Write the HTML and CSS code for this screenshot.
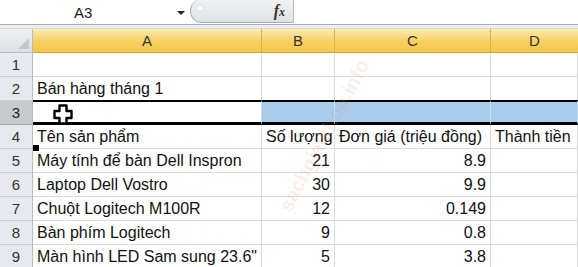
FILE: index.html
```html
<!DOCTYPE html>
<html>
<head>
<meta charset="utf-8">
<link rel="stylesheet" href="styles.css">
</head>
<body>
<div class="app">
  <div class="fbar">
    <div class="namebox"><span class="ref">A3</span></div>
    <div class="nb-arrow"></div>
    <div class="pill"><span class="bump"></span><span class="fx">f<span class="fxx">x</span></span></div>
    <div class="formula"></div>
  </div>
  <div class="strip"></div>
  <div class="sheet">
    <div class="grid">
      <div class="corner"><span class="tri"></span></div>
      <div class="ch">A</div><div class="ch">B</div><div class="ch">C</div><div class="ch last">D</div>

      <div class="rh">1</div><div class="c"></div><div class="c"></div><div class="c"></div><div class="c"></div>

      <div class="rh">2</div><div class="c t">Bán hàng tháng 1</div><div class="c"></div><div class="c"></div><div class="c"></div>

      <div class="rh sel">3</div><div class="c act"></div><div class="c hl"></div><div class="c hl"></div><div class="c hl"></div>

      <div class="rh">4</div><div class="c t">Tên sản phẩm</div><div class="c t">Số lượng</div><div class="c t">Đơn giá (triệu đồng)</div><div class="c t">Thành tiền</div>

      <div class="rh">5</div><div class="c t">Máy tính để bàn Dell Inspron</div><div class="c n">21</div><div class="c n">8.9</div><div class="c"></div>

      <div class="rh">6</div><div class="c t">Laptop Dell Vostro</div><div class="c n">30</div><div class="c n">9.9</div><div class="c"></div>

      <div class="rh">7</div><div class="c t">Chuột Logitech M100R</div><div class="c n">12</div><div class="c n">0.149</div><div class="c"></div>

      <div class="rh">8</div><div class="c t">Bàn phím Logitech</div><div class="c n">9</div><div class="c n">0.8</div><div class="c"></div>

      <div class="rh">9</div><div class="c t">Màn hình LED Sam sung 23.6"</div><div class="c n">5</div><div class="c n">3.8</div><div class="c"></div>
    </div>
    <div class="handle"></div>
    <svg class="cursor" width="20" height="21" viewBox="0 0 20 21">
      <path d="M6.5 1.5 H13.5 V7 H18.5 V14 H13.5 V19.5 H6.5 V14 H1.5 V7 H6.5 Z" fill="#fff" stroke="#000" stroke-width="2.4" stroke-linejoin="round"/>
    </svg>
    <div class="watermark">sachgiaikhoa.info</div>
  </div>
</div>
</body>
</html>
```
FILE: styles.css
```css
* { box-sizing: border-box; }
html, body { margin: 0; padding: 0; background: #fff; }
.app { width: 578px; height: 267px; overflow: hidden; font-family: "Liberation Sans", Arial, sans-serif; }

.fbar { display: flex; height: 25px; border-bottom: 1px solid #a9adb3; background: #fff; }
.namebox { width: 172px; display: flex; align-items: center; padding-left: 74px; }
.ref { font-size: 15px; color: #222; }
.nb-arrow { width: 18px; display: flex; align-items: center; justify-content: center; }
.nb-arrow::before { content: ""; border-left: 4px solid transparent; border-right: 4px solid transparent; border-top: 4px solid #222; margin-top: 1px; }
.pill { width: 104px; height: 24px; border: 1px solid #a8aeb6; border-right: 1px solid #b9bec5; border-top: none; border-radius: 14px 0 0 14px; background: linear-gradient(#f1f2f4, #dfe2e6); display: flex; align-items: center; justify-content: space-between; padding: 0 8px 0 5px; margin-top: -1px; }
.bump { width: 8px; height: 8px; border-radius: 50%; background: #f8f9fa; border: 1px solid #d8dbe0; margin-top: -6px; }
.fx { font-family: "Liberation Serif", serif; font-style: italic; font-weight: bold; font-size: 16px; color: #333; }
.fxx { font-size: 12px; }
.formula { flex: 1; background: #fff; }

.strip { height: 4px; background: #eceef1; border-bottom: 1px solid #d5d8dc; }

.sheet { position: relative; }
.grid { display: grid; grid-template-columns: 33px 229px 73px 156px 87px; grid-template-rows: 24px repeat(9, 24px); font-family: "Liberation Sans", Arial, sans-serif; }
.grid > div { overflow: visible; white-space: nowrap; }

.corner { position: relative; background: linear-gradient(#eef0f3, #dcdfe4); border-right: 1px solid #b9bdc3; border-bottom: 1px solid #b9bdc3; }
.tri { position: absolute; right: 3px; bottom: 3px; width: 0; height: 0; border-left: 11px solid transparent; border-bottom: 11px solid #c4c8ce; }
.ch { background: linear-gradient(#fcebb0, #f7d061 55%, #f5c84c); border-right: 1px solid #d6b35a; border-bottom: 1px solid #caa44c; display: flex; align-items: center; justify-content: center; font-size: 15px; color: #333; }
.ch.last { border-right: none; }

.rh { background: #e6e9ee; border-right: 1px solid #b9bdc3; border-bottom: 1px solid #cdd1d7; display: flex; align-items: center; justify-content: center; font-size: 15px; color: #333; }
.rh.sel { background: #c8c9cb; color: #222; border-bottom-color: #a9abae; }

.c { border-right: 1px solid #dadcdd; border-bottom: 1px solid #dadcdd; display: flex; align-items: flex-end; padding: 0 4px 2px 4px; font-size: 16px; color: #111; }
.c.t { justify-content: flex-start; }
.c.n { justify-content: flex-end; }
.act { border-top: 2px solid #000; border-bottom: 3px solid #000; margin-top: -1px; background: #fff; }
.hl { border-top: 2px solid #000; border-bottom: 3px solid #000; margin-top: -1px; background: #a9cbec; border-right-color: #c6dcf2; }

.handle { position: absolute; left: 33px; top: 116px; width: 6px; height: 6px; background: #000; }
.cursor { position: absolute; left: 53px; top: 75px; }
.watermark { position: absolute; left: 240px; top: 95px; transform: rotate(-62deg); font-size: 20px; color: rgba(230, 150, 110, 0.16); font-family: "Liberation Sans", Arial, sans-serif; font-weight: bold; white-space: nowrap; pointer-events: none; }
```
